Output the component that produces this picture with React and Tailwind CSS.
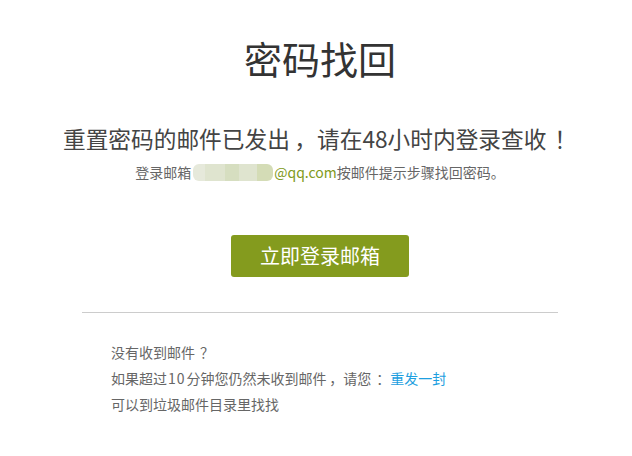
function P({ children, pad = "ml-[0.35em]" }) {
  return <span className={pad}>{children}</span>;
}

export default function App() {
  const font = { fontFamily: '"Noto Sans CJK SC", sans-serif' };
  return (
    <div className="min-h-[456px] w-full bg-white pl-2" style={font}>
      <div className="flex flex-col items-center">
        <h1 className="mt-[35px] text-[38px] leading-[46px] text-[#333333] font-normal">密码找回</h1>
        <p className="mt-[42px] text-[22.7px] leading-[31px] text-[#444444]">
          重置密码的邮件已发出<P pad="ml-[0.2em]">，</P>请在48小时内登录查收<P>！</P>
        </p>
        <p className="mt-[8px] flex items-center text-[14px] leading-[20px] text-[#666666]">
          <span>登录邮箱</span>
          <span className="ml-[2px] mr-[1px] flex h-[17px] w-[80px] overflow-hidden rounded-[6px]">
            <span className="w-[12px] bg-[#e6e9db]" />
            <span className="w-[20px] bg-[#dfe4cf]" />
            <span className="w-[14px] bg-[#d6dec0]" />
            <span className="w-[18px] bg-[#dfe4cf]" />
            <span className="w-[16px] bg-[#d4dcb6]" />
          </span>
          <span className="text-[#7f9a20]">@qq.com</span>
          <span>按邮件提示步骤找回密码。</span>
        </p>
        <button className="mt-[53px] h-[42px] w-[178px] rounded-[3px] bg-[#849b1e] text-[20px] text-white">
          立即登录邮箱
        </button>
        <div className="mt-[35px] w-[476px] border-t border-[#cccccc]">
          <div className="mt-[26px] pl-[29px] text-[14px] leading-[26px] text-[#666666]">
            <p>没有收到邮件<P>？</P></p>
            <p>
              如果超过<span className="mx-[1px] tracking-[1px]">10</span>分钟您仍然未收到邮件<P pad="ml-[0.2em]">，</P>请您<P>：</P><a className="text-[#1e9fe0]">重发一封</a>
            </p>
            <p>可以到垃圾邮件目录里找找</p>
          </div>
        </div>
      </div>
    </div>
  );
}
